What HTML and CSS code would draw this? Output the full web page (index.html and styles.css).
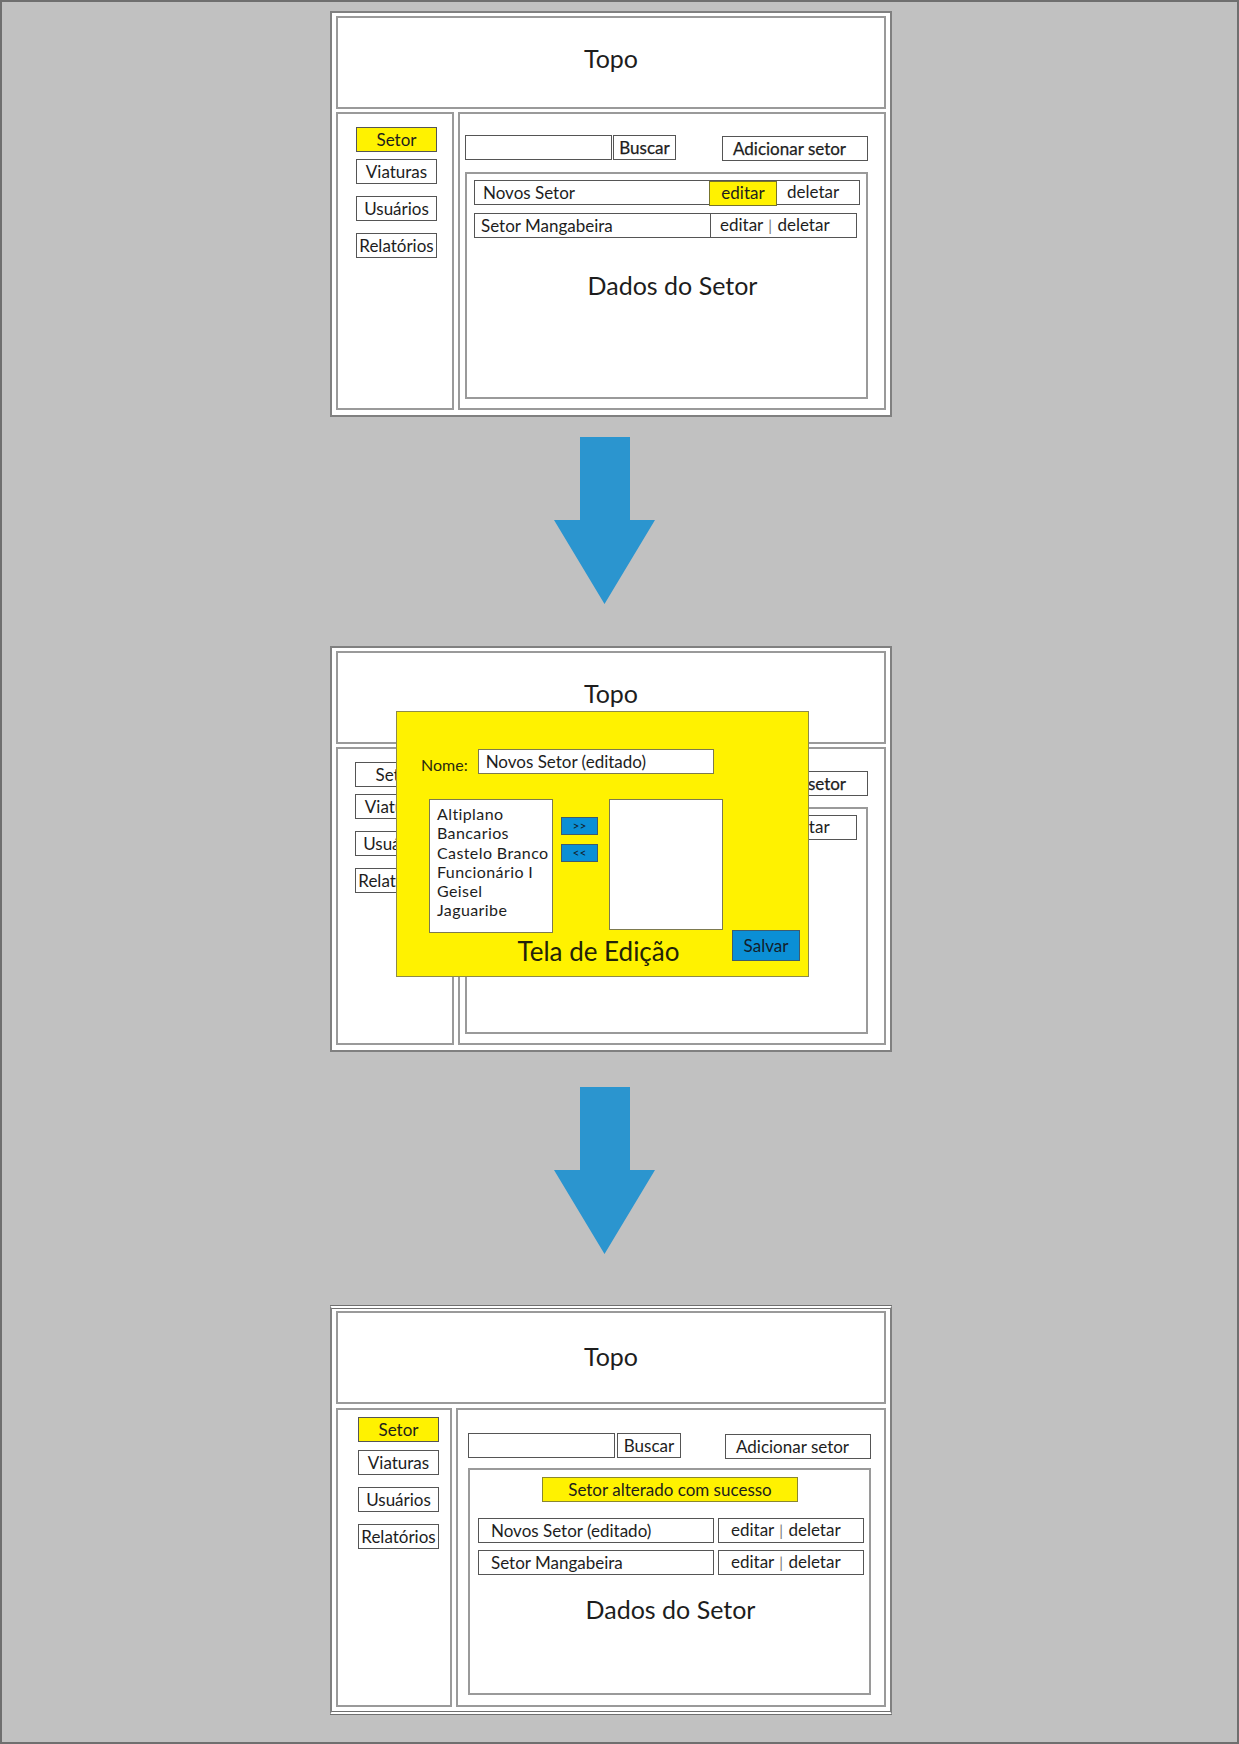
FILE: index.html
```html
<!DOCTYPE html>
<html>
  <head>
    <meta charset="utf-8">
    <title>Fluxo de edição de setor</title>
    <link rel="stylesheet" href="styles.css">
  </head>
  <body>
    <div class="page">

      <!-- tela inicial -->
      <section class="frame">
        <header class="topo">Topo</header>
        <div class="frame-body">
          <nav class="sidebar">
            <span class="nav-item active">Setor</span>
            <span class="nav-item">Viaturas</span>
            <span class="nav-item">Usuários</span>
            <span class="nav-item">Relatórios</span>
          </nav>
          <div class="main">
            <div class="toolbar">
              <span class="search"></span>
              <span class="btn buscar strong">Buscar</span>
              <span class="btn add strong">Adicionar setor</span>
            </div>
            <div class="content">
              <div class="row row-first">
                <span class="cell-name">Novos Setor</span>
                <span class="cell-actions"><span class="edit-on">editar</span><span class="del">deletar</span></span>
              </div>
              <div class="row row-second">
                <span class="cell-name">Setor Mangabeira</span>
                <span class="cell-actions">editar <span class="sep">|</span> deletar</span>
              </div>
              <h2 class="dados">Dados do Setor</h2>
            </div>
          </div>
        </div>
      </section>

      <div class="arrow">
        <svg width="101" height="167" viewBox="0 0 101 167"><polygon points="26,0 76,0 76,83 101,83 50.5,167 0,83 26,83" fill="#2b95cf"/></svg>
      </div>

      <!-- tela de edicao -->
      <section class="frame frame-edit">
        <header class="topo">Topo</header>
        <div class="frame-body">
          <nav class="sidebar">
            <span class="nav-item">Setor</span>
            <span class="nav-item">Viaturas</span>
            <span class="nav-item">Usuários</span>
            <span class="nav-item">Relatórios</span>
          </nav>
          <div class="main">
            <div class="toolbar">
              <span class="search"></span>
              <span class="btn buscar strong">Buscar</span>
              <span class="btn add strong">Adicionar setor</span>
            </div>
            <div class="content">
              <div class="row row-second">
                <span class="cell-name">Novos Setor</span>
                <span class="cell-actions">editar <span class="sep">|</span> deletar</span>
              </div>
            </div>
          </div>
        </div>

        <div class="modal">
          <div class="modal-name">
            <label>Nome:</label>
            <span class="name-input">Novos Setor (editado)</span>
          </div>
          <div class="modal-lists">
            <ul class="list list-left">
              <li>Altiplano</li>
              <li>Bancarios</li>
              <li>Castelo Branco</li>
              <li>Funcionário I</li>
              <li>Geisel</li>
              <li>Jaguaribe</li>
            </ul>
            <div class="movers">
              <span class="mover">&gt;&gt;</span>
              <span class="mover">&lt;&lt;</span>
            </div>
            <ul class="list list-right"></ul>
          </div>
          <div class="modal-foot">
            <h2 class="modal-title">Tela de Edição</h2>
            <span class="salvar">Salvar</span>
          </div>
        </div>
      </section>

      <div class="arrow">
        <svg width="101" height="167" viewBox="0 0 101 167"><polygon points="26,0 76,0 76,83 101,83 50.5,167 0,83 26,83" fill="#2b95cf"/></svg>
      </div>

      <!-- resultado -->
      <section class="frame frame-done">
        <header class="topo">Topo</header>
        <div class="frame-body">
          <nav class="sidebar">
            <span class="nav-item active">Setor</span>
            <span class="nav-item">Viaturas</span>
            <span class="nav-item">Usuários</span>
            <span class="nav-item">Relatórios</span>
          </nav>
          <div class="main">
            <div class="toolbar">
              <span class="search"></span>
              <span class="btn buscar">Buscar</span>
              <span class="btn add">Adicionar setor</span>
            </div>
            <div class="content">
              <div class="banner">Setor alterado com sucesso</div>
              <div class="row-split">
                <span class="box-name">Novos Setor (editado)</span>
                <span class="box-act">editar <span class="sep">|</span> deletar</span>
              </div>
              <div class="row-split">
                <span class="box-name">Setor Mangabeira</span>
                <span class="box-act">editar <span class="sep">|</span> deletar</span>
              </div>
              <h2 class="dados">Dados do Setor</h2>
            </div>
          </div>
        </div>
      </section>

    </div>
  </body>
</html>
```

FILE: styles.css
```css
*{
  margin:0;
  padding:0;
  box-sizing:border-box;
}
body{
  font-family:Lato,"Open Sans","DejaVu Sans",sans-serif;
  font-size:17px;
  color:#1d1d1d;
}
.page{
  width:1239px;
  height:1744px;
  background:#c1c1c1;
  border:2px solid #6f6f6f;
  padding:9px 0 0 328px;
}

/* moldura de cada tela */
.frame{
  position:relative;
  width:562px;
  height:406px;
  background:#fff;
  border:2px solid #808080;
  padding:3px 4px 5px;
  display:flex;
  flex-direction:column;
  gap:3px;
}
.frame-edit{
  margin-top:42px;
}
.frame-done{
  margin-top:51px;
  height:410px;
  border-top:4px double #6f6f6f;
  border-bottom:4px double #6f6f6f;
  gap:4px;
  padding:2px 4px 4px;
}
.topo{
  height:93px;
  border:2px solid #9a9a9a;
  display:flex;
  align-items:center;
  justify-content:center;
  font-size:25px;
  padding-bottom:10px;
}
.frame-done .topo{
  padding-bottom:4px;
}
.frame-body{
  flex:1;
  display:flex;
  gap:4px;
}

/* menu lateral */
.sidebar{
  width:120px;
  border:2px solid #9a9a9a;
  padding:13px 0 0 18px;
  display:flex;
  flex-direction:column;
  align-items:flex-start;
}
.frame-done .sidebar{
  padding:7px 0 0 20px;
}
.frame-edit .sidebar{
  padding-left:17px;
}
.nav-item{
  display:block;
  width:81px;
  height:25px;
  border:1px solid #555;
  line-height:23px;
  text-align:center;
}
.nav-item + .nav-item{
  margin-top:12px;
}
.nav-item:nth-child(2){
  margin-top:7px;
}
.frame-done .nav-item:nth-child(2){
  margin-top:8px;
}
.nav-item.active{
  background:#fff200;
}

/* area principal */
.main{
  flex:1;
  border:2px solid #9a9a9a;
  padding:21px 16px 0 5px;
}
.frame-done .main{
  padding:23px 13px 0 10px;
}
.toolbar{
  display:flex;
  align-items:flex-start;
}
.search{
  width:147px;
  height:25px;
  border:1px solid #555;
}
.btn{
  height:25px;
  border:1px solid #555;
  line-height:23px;
}
.buscar{
  width:63px;
  margin-left:1px;
  text-align:center;
}
.frame-done .buscar{
  width:64px;
  margin-left:2px;
}
.add{
  width:146px;
  margin-left:auto;
  margin-top:1px;
  padding-left:10px;
}
.strong{
  -webkit-text-stroke:0.25px #1d1d1d;
}
.content{
  width:403px;
  height:227px;
  margin-top:11px;
  border:2px solid #9a9a9a;
  padding:6px 0 0 7px;
}
.frame-done .content{
  margin-top:9px;
  padding:7px 0 0 8px;
}
.row{
  display:flex;
  height:25px;
  border:1px solid #555;
  line-height:23px;
}
.cell-name{
  padding-left:8px;
}
.row-first{
  width:386px;
}
.row-first .cell-name{
  width:234px;
}
.edit-on{
  display:inline-block;
  width:68px;
  height:25px;
  margin-top:-1px;
  background:#fff200;
  border:1px solid #77742c;
  text-align:center;
  line-height:21px;
}
.del{
  padding-left:10px;
  vertical-align:top;
  line-height:21px;
}
.row-second{
  width:383px;
  margin-top:8px;
}
.frame-edit .row-second{
  margin-top:0;
}
.row-second .cell-name{
  width:236px;
  padding-left:6px;
  border-right:1px solid #555;
}
.row-second .cell-actions{
  padding-left:9px;
  line-height:21px;
}
.sep{
  color:#777;
  font-size:15px;
  padding:0 1px;
}
.dados{
  font-size:25px;
  font-weight:normal;
  line-height:30px;
  text-align:center;
  margin-top:32px;
  padding-left:5px;
}
.frame-done .dados{
  margin-top:19px;
  padding:0 6px 0 0;
}

/* mensagem e linhas da tela final */
.banner{
  width:256px;
  height:25px;
  margin-left:64px;
  background:#fff200;
  border:1px solid #8a8730;
  line-height:23px;
  text-align:center;
}
.row-split{
  display:flex;
  gap:4px;
  margin-top:7px;
}
.banner + .row-split{
  margin-top:16px;
}
.box-name,
.box-act{
  height:25px;
  border:1px solid #555;
  line-height:23px;
  padding-left:12px;
}
.box-name{
  width:236px;
}
.box-act{
  width:146px;
  line-height:21px;
}

/* setas */
.arrow{
  margin:20px 0 0 224px;
  height:167px;
}
.arrow svg{
  display:block;
}
.frame-edit + .arrow{
  margin-top:35px;
}

/* janela de edicao */
.modal{
  position:absolute;
  left:64px;
  top:63px;
  width:413px;
  height:266px;
  background:#fff200;
  border:1px solid #8d8a4a;
  padding:37px 8px 0 24px;
}
.modal-name{
  display:flex;
  align-items:flex-start;
  height:25px;
}
.modal-name label{
  font-size:16px;
  line-height:18px;
  padding-top:7px;
  color:#2a2a10;
}
.name-input{
  width:236px;
  height:25px;
  margin-left:10px;
  background:#fff;
  border:1px solid #7d7a50;
  line-height:23px;
  padding-left:7px;
}
.modal-lists{
  display:flex;
  align-items:flex-start;
  margin:25px 0 0 8px;
}
.list{
  list-style:none;
  background:#fff;
  border:1px solid #7d7a50;
}
.list-left{
  width:124px;
  height:134px;
  padding:4px 0 0 7px;
  font-size:16px;
  letter-spacing:0.4px;
  line-height:19.3px;
}
.list-right{
  width:114px;
  height:131px;
  margin-left:11px;
}
.movers{
  display:flex;
  flex-direction:column;
  gap:9px;
  margin:18px 0 0 8px;
}
.mover{
  display:block;
  width:37px;
  height:18px;
  background:#0b8fd5;
  border:1px solid #3e5c6e;
  font-size:12px;
  line-height:16px;
  text-align:center;
  color:#13202a;
}
.modal-foot{
  display:grid;
  grid-template-columns:1fr auto 1fr;
  margin:-3px 0 0 -24px;
}
.modal-title{
  grid-column:2;
  font-size:26px;
  font-weight:normal;
  line-height:30px;
  margin-top:6px;
  color:#22220a;
}
.salvar{
  grid-column:3;
  justify-self:end;
  width:68px;
  height:31px;
  background:#0b8fd5;
  border:1px solid #3e5c6e;
  line-height:29px;
  text-align:center;
  color:#13202a;
}
```
